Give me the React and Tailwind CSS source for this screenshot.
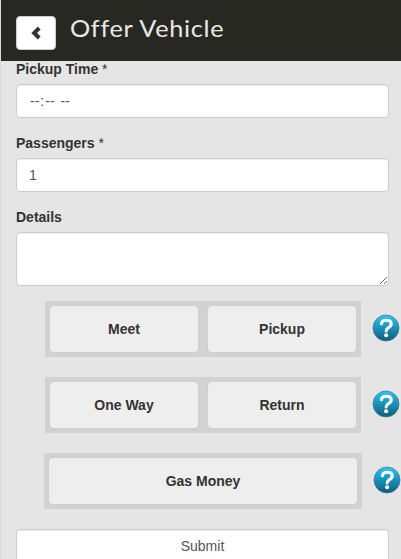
const field =
  'block w-full rounded border border-[#ccc] bg-white px-3 text-[14px] leading-5 text-[#555] shadow-[inset_0_1px_1px_rgba(0,0,0,0.075)] outline-none';

function HelpIcon() {
  return (
    <svg width="28" height="28" viewBox="0 0 28 28" className="shrink-0" role="img">
      <defs>
        <linearGradient id="helpFill" x1="0" y1="0" x2="0" y2="1">
          <stop offset="0" stopColor="#2cc8f4" />
          <stop offset="0.4" stopColor="#1c9cc6" />
          <stop offset="1" stopColor="#105c7a" />
        </linearGradient>
      </defs>
      <circle cx="14" cy="14" r="13" fill="url(#helpFill)" stroke="#3f7488" strokeWidth="0.7" />
      <path
        d="M9.4 9.7C9.7 7.4 11.5 6.3 14.2 6.3C17.3 6.3 19.2 7.7 19.2 10C19.2 12 17.9 12.8 16.3 13.8C14.9 14.7 14.3 15.3 14.2 17"
        fill="none"
        stroke="#fff"
        strokeWidth="3.1"
        strokeLinecap="round"
        strokeLinejoin="round"
      />
      <circle cx="14.1" cy="21.3" r="2" fill="#fff" />
    </svg>
  );
}

function Label({ children, required }) {
  return (
    <label className="mb-[5px] block text-[14px] font-bold leading-5 text-[#333]">
      {children}
      {required && <span className="font-normal"> *</span>}
    </label>
  );
}

function Choice({ children }) {
  return (
    <button className="h-[46px] flex-1 rounded bg-[#eee] text-[14px] font-bold leading-5 text-[#333] shadow-[0_0_1px_rgba(0,0,0,0.12)]">
      {children}
    </button>
  );
}

function ChoiceRow({ options, wide }) {
  return (
    <div className={wide ? 'mb-5 ml-7 flex items-center gap-[11px]' : 'mb-5 ml-[29px] flex items-center gap-[11px]'}>
      <div className={wide ? 'flex w-[318px] shrink-0 bg-[#d2d2d2] p-[5px]' : 'flex w-[316px] shrink-0 gap-[10px] bg-[#d2d2d2] p-[5px]'}>
        {options.map((o) => (
          <Choice key={o}>{o}</Choice>
        ))}
      </div>
      <div className="-mt-0.5">
        <HelpIcon />
      </div>
    </div>
  );
}

export default function App() {
  return (
    <div className="h-[559px] w-[401px] overflow-hidden border-l border-[#dcdcdc] bg-[#e5e5e5] font-['Liberation_Sans',Arial,sans-serif]">
      <header className="flex h-[61px] items-start bg-[#282822] pl-[15px] pt-4">
        <button className="flex h-[34px] w-10 items-center justify-center rounded border border-[#ccc] bg-white">
          <svg width="10" height="14" viewBox="0 0 10 14">
            <path d="M8.2 2L3.2 7L8.2 12" fill="none" stroke="#333" strokeWidth="4" />
          </svg>
        </button>
        <h1 className="ml-[14px] -mt-1 origin-left scale-x-[1.055] whitespace-nowrap font-['Lato',sans-serif] text-[24px] leading-8 tracking-[0.65px] text-[#e8e8e8]">
          Offer Vehicle
        </h1>
      </header>
      <main className="w-[388px] pl-[15px] -mt-0.5">
        <div className="mb-[15px]">
          <Label required>Pickup Time</Label>
          <div className={`${field} flex h-[34px] items-center`}>
            <span className="flex pl-px">
              <span>--</span>
              <span className="ml-px">:</span>
              <span className="ml-px">--</span>
              <span className="ml-1.5">--</span>
            </span>
          </div>
        </div>
        <div className="mb-[15px]">
          <Label required>Passengers</Label>
          <input className={`${field} h-[34px]`} defaultValue="1" />
        </div>
        <div className="mb-[15px]">
          <Label>Details</Label>
          <textarea className={`${field} h-[54px] resize py-1.5`} />
        </div>
        <ChoiceRow options={['Meet', 'Pickup']} />
        <ChoiceRow options={['One Way', 'Return']} />
        <ChoiceRow options={['Gas Money']} wide />
        <button className={`${field} h-[34px] text-center`}>Submit</button>
      </main>
    </div>
  );
}
